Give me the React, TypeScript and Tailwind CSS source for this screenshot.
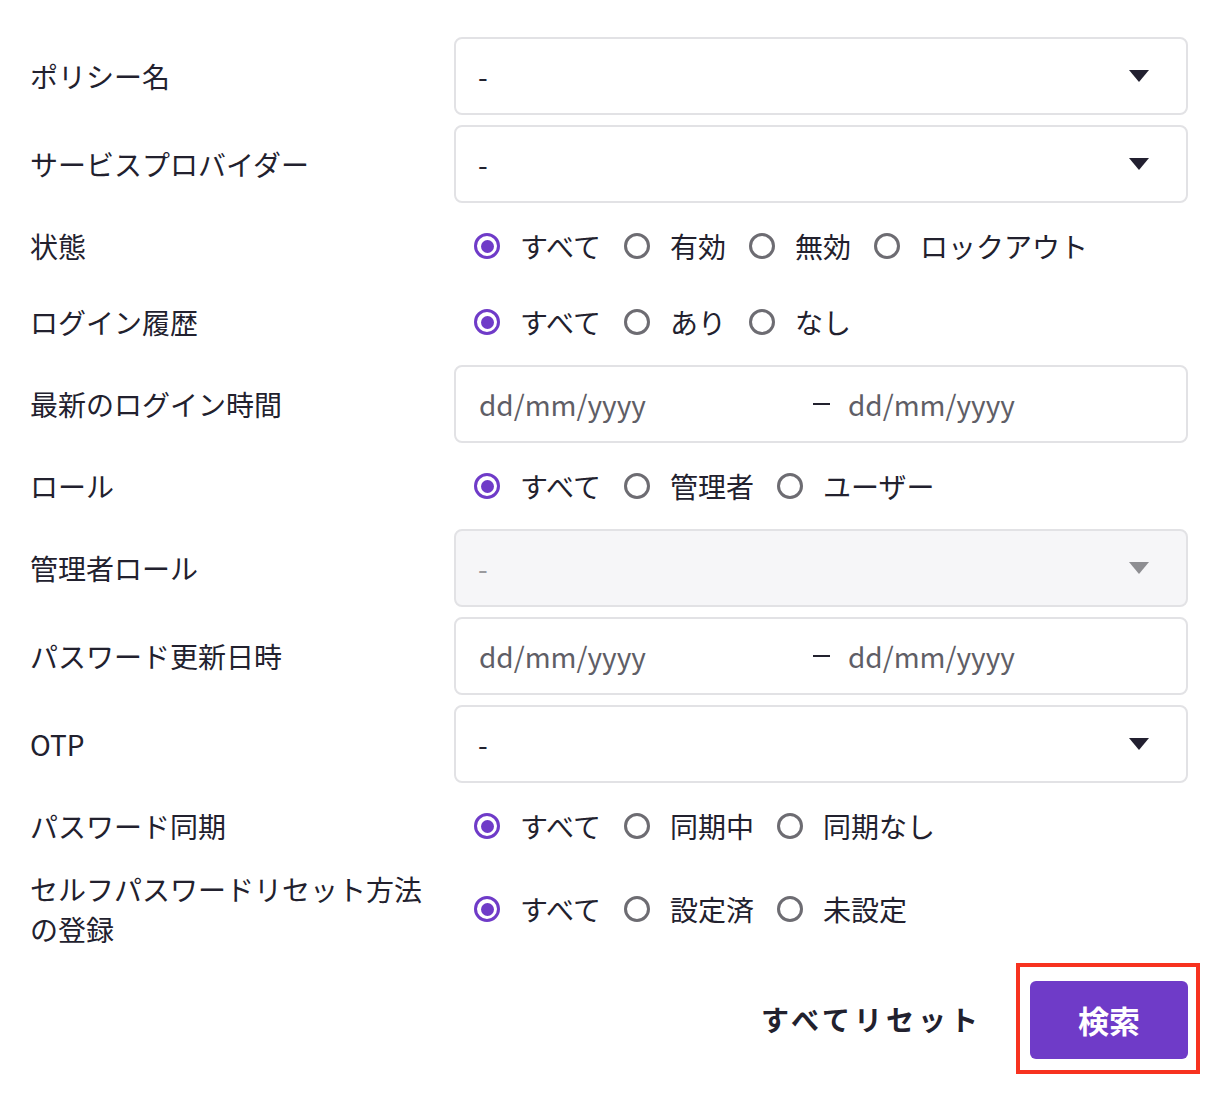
import React from 'react';

const font = { fontFamily: '"Noto Sans CJK JP", "Noto Sans", sans-serif' };

function Caret({ disabled }: { disabled?: boolean }) {
  return (
    <svg width="20" height="12" viewBox="0 0 20 12" className="shrink-0">
      <path d="M0 0 H20 L10 12 Z" fill={disabled ? '#8e8e92' : '#222030'} />
    </svg>
  );
}

function Select({ disabled }: { disabled?: boolean }) {
  return (
    <div
      className={`h-[78px] flex items-center justify-between pl-[22px] pr-[37px] border-2 border-[#e2e2e5] rounded-[8px] ${
        disabled ? 'bg-[#f6f6f8] text-[#9a9a9e]' : 'bg-white text-[#22212e]'
      }`}
    >
      <span>-</span>
      <Caret disabled={disabled} />
    </div>
  );
}

function DateRange() {
  return (
    <div className="h-[78px] flex items-center pl-[23px] border-2 border-[#e2e2e5] rounded-[8px] bg-white text-[#5f5e66]">
      <span className="w-[334px]">dd/mm/yyyy</span>
      <span className="w-[17px] h-[2px] bg-[#22212e]" />
      <span className="ml-[18px]">dd/mm/yyyy</span>
    </div>
  );
}

function Radios({ options }: { options: string[] }) {
  return (
    <div className="flex items-center pl-[20px] text-[#22212e]">
      {options.map((o, i) => (
        <div key={o} className="flex items-center mr-[23px]">
          {i === 0 ? (
            <span className="w-[26px] h-[26px] rounded-full border-[3px] border-[#6f3bc8] flex items-center justify-center">
              <span className="w-[13px] h-[13px] rounded-full bg-[#6f3bc8]" />
            </span>
          ) : (
            <span className="w-[26px] h-[26px] rounded-full border-[3px] border-[#6d6c72]" />
          )}
          <span className="ml-[20px]">{o}</span>
        </div>
      ))}
    </div>
  );
}

function Row({ label, h, children }: { label: React.ReactNode; h: string; children: React.ReactNode }) {
  return (
    <div className={`flex items-center ${h}`}>
      <div className="w-[424px] shrink-0 text-[#22212e] leading-[40px]">{label}</div>
      <div className="flex-1">{children}</div>
    </div>
  );
}

export default function App() {
  return (
    <div className="w-[1222px] min-h-[1094px] bg-white pt-[37px] pl-[30px] pr-[34px] text-[28px]" style={font}>
      <div className="flex flex-col gap-[10px]">
        <Row label="ポリシー名" h="h-[78px]"><Select /></Row>
        <Row label="サービスプロバイダー" h="h-[78px]"><Select /></Row>
        <Row label="状態" h="h-[66px]"><Radios options={['すべて', '有効', '無効', 'ロックアウト']} /></Row>
        <Row label="ログイン履歴" h="h-[66px]"><Radios options={['すべて', 'あり', 'なし']} /></Row>
        <Row label="最新のログイン時間" h="h-[78px]"><DateRange /></Row>
        <Row label="ロール" h="h-[66px]"><Radios options={['すべて', '管理者', 'ユーザー']} /></Row>
        <Row label="管理者ロール" h="h-[78px]"><Select disabled /></Row>
        <Row label="パスワード更新日時" h="h-[78px]"><DateRange /></Row>
        <Row label="OTP" h="h-[78px]"><Select /></Row>
        <Row label="パスワード同期" h="h-[66px]"><Radios options={['すべて', '同期中', '同期なし']} /></Row>
        <Row label={<>セルフパスワードリセット方法<br />の登録</>} h="h-[80px]">
          <Radios options={['すべて', '設定済', '未設定']} />
        </Row>
      </div>
      <div className="flex items-center justify-end mt-[14px] mr-[-12px]">
        <button className="text-[28px] font-bold tracking-[4px] text-[#22212e] mr-[34px]">すべてリセット</button>
        <div className="border-[4px] border-[#f7321f] pt-[14px] pb-[11px] pl-[10px] pr-[8px]">
          <button className="w-[158px] h-[78px] rounded-[6px] bg-[#6f3bc8] text-white font-bold text-[31px]">検索</button>
        </div>
      </div>
    </div>
  );
}
